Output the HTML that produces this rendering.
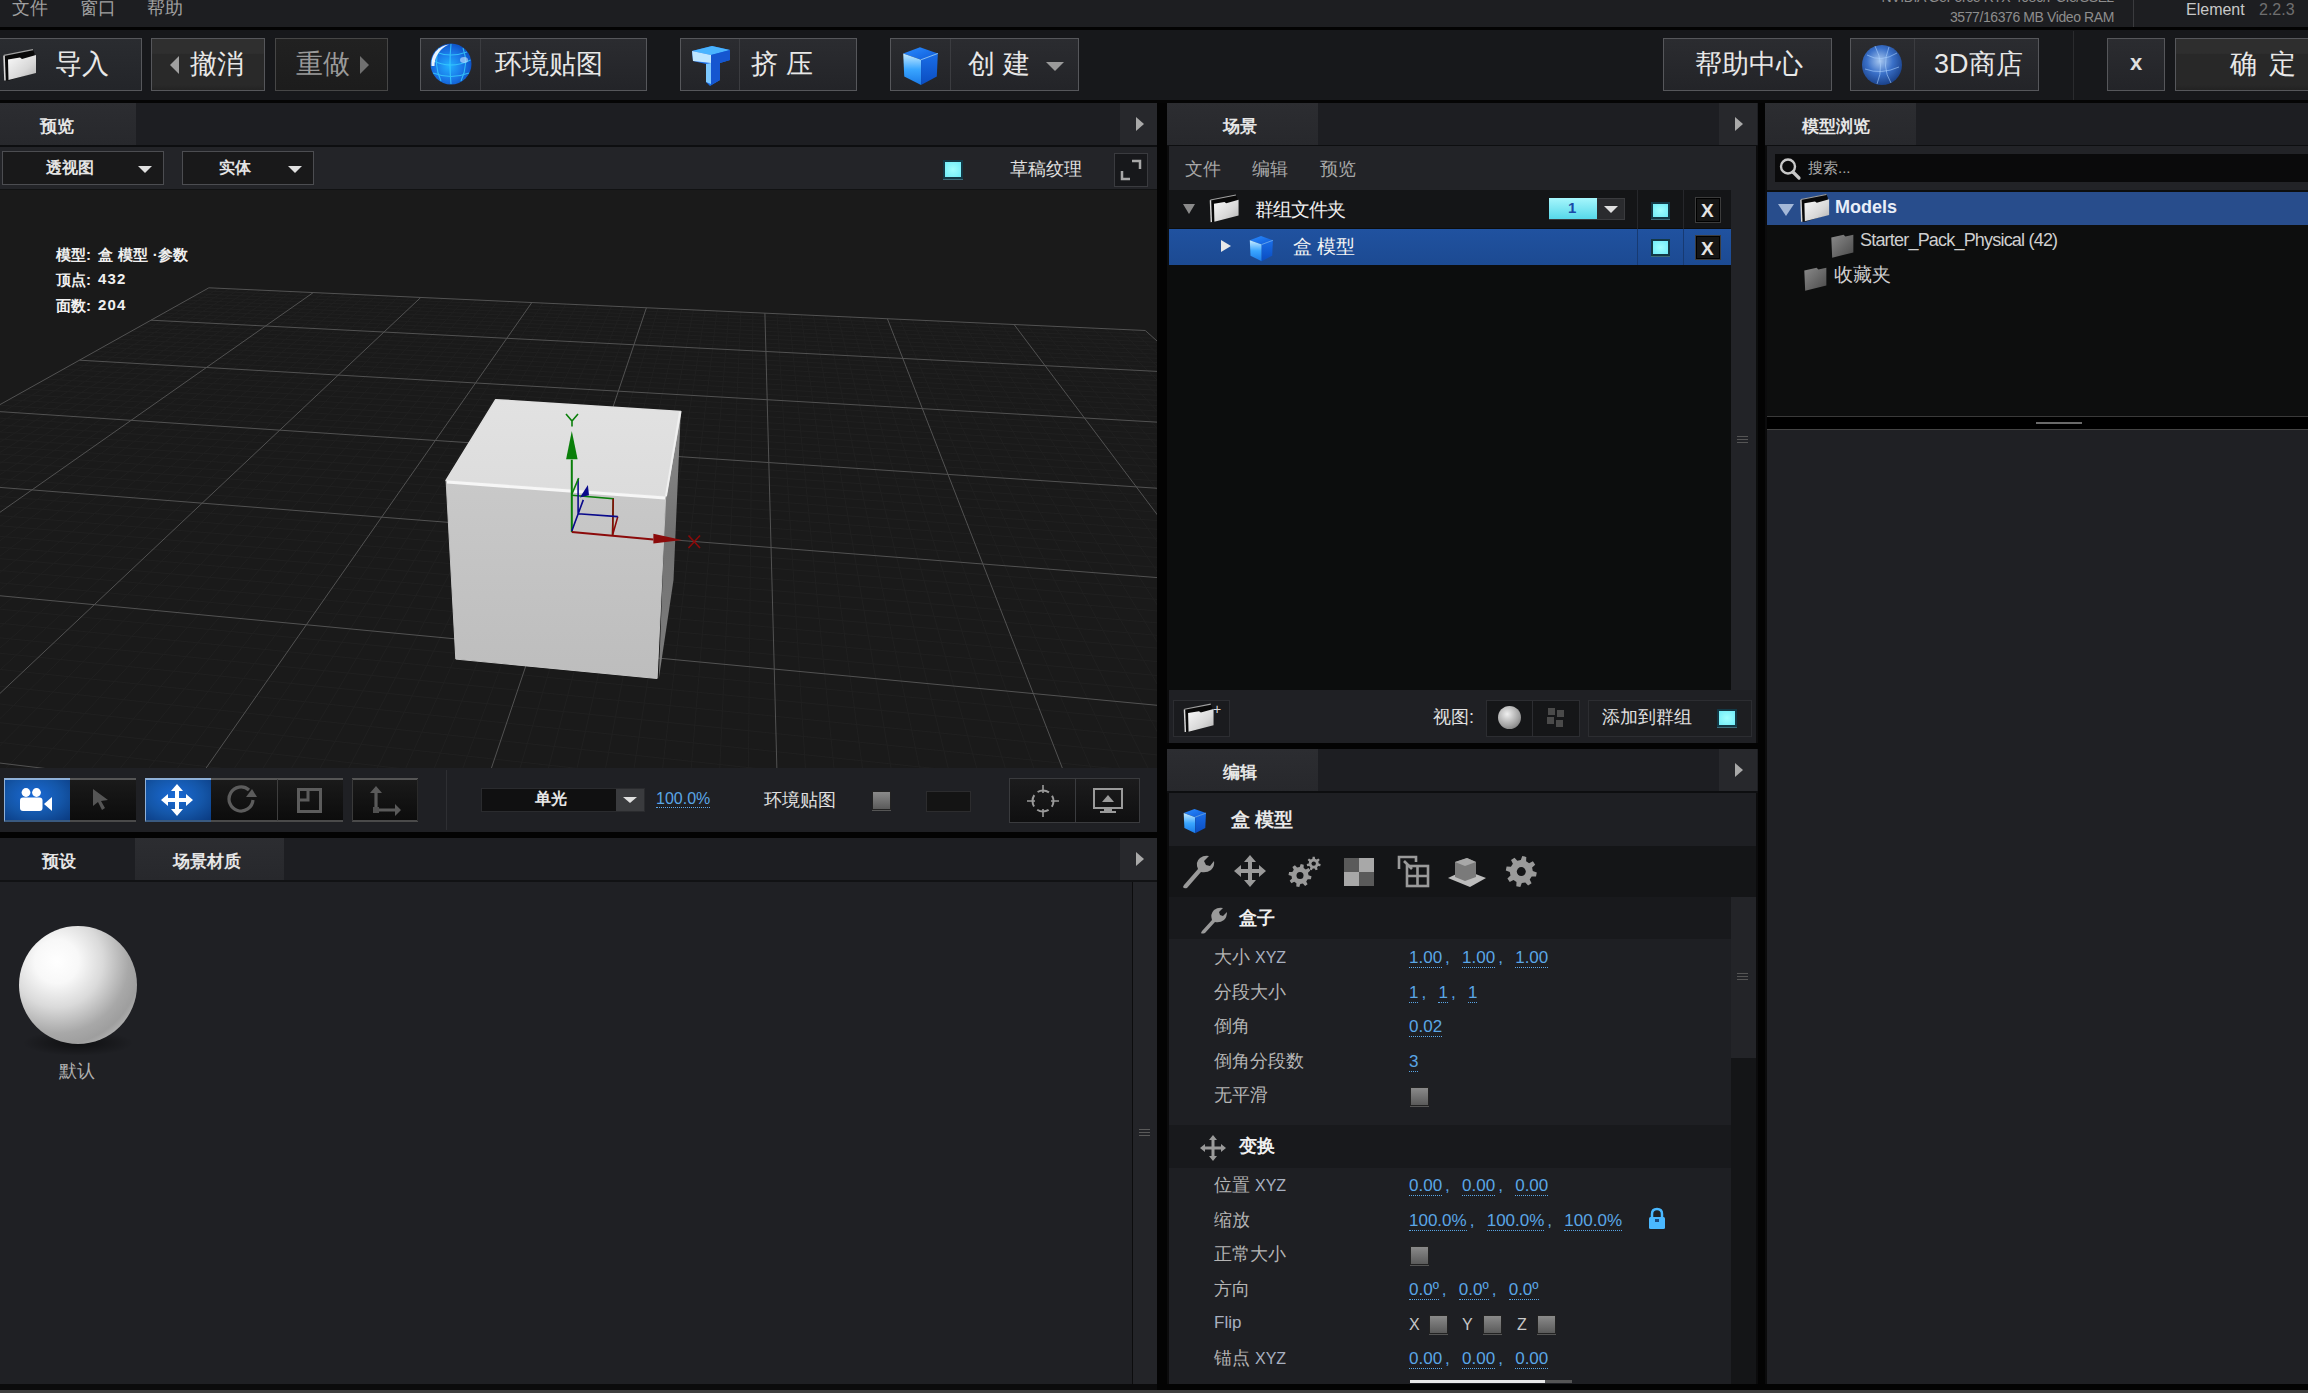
<!DOCTYPE html>
<html><head><meta charset="utf-8">
<style>
*{box-sizing:border-box;margin:0;padding:0}
html,body{width:2308px;height:1393px;overflow:hidden;background:#0b0b0c;font-family:"Liberation Sans",sans-serif;color:#ddd}
.a{position:absolute}
.t{position:absolute;white-space:nowrap;line-height:1}
/* top */
#menubar{left:0;top:0;width:2308px;height:27px;background:#1d1e21}
#toolbar{left:0;top:30px;width:2308px;height:70px;background:#17181b}
.tb{position:absolute;top:38px;height:53px;border:1px solid #56575b;background:linear-gradient(#2b2c30,#232428);}
.tbt{font-size:27px;color:#e8e8e8;top:51px;font-weight:500}
.ptab{position:absolute;height:42px;background:#1d1e22}
.tabon{position:absolute;top:0;height:42px;background:linear-gradient(#2c2d31,#27282c);}
.tabt{font-size:17px;font-weight:bold;color:#e6e6e6}
.arrowbtn{position:absolute;top:0;width:38px;height:42px;background:#27282c}
.arrowbtn:after{content:"";position:absolute;left:16px;top:14px;border-left:8px solid #a9a9a9;border-top:7px solid transparent;border-bottom:7px solid transparent}
.chk{position:absolute;width:19px;height:19px;background:radial-gradient(#a0ffff,#70ecf8);border:2.5px solid #133845;box-shadow:0 1px 0 #3d6a78}
.gchk{position:absolute;width:19px;height:19px;background:linear-gradient(#8a8a8a,#5a5a5a);border:1px solid #222;box-shadow:0 1px 0 #555}
.lbl{position:absolute;font-size:18px;color:#b4b4b4;white-space:nowrap;line-height:1}
.val{position:absolute;font-size:17px;color:#5aa6e6;white-space:nowrap;line-height:1}
.val u{text-decoration:none;border-bottom:1px dotted #5aa6e6}
.val i{display:inline-block;width:20px;font-style:normal;text-indent:3px}
.dd{position:absolute;border:1px solid #4c4d51;background:#19191a}
.ddt{font-size:16px;font-weight:bold;color:#e4e4e4}
.tri{position:absolute;width:0;height:0;border-top:7px solid #e0e0e0;border-left:7px solid transparent;border-right:7px solid transparent}
.vb{position:absolute;top:778px;height:44px;background:linear-gradient(#1a1a1a,#0c0c0c);border-top:2px solid #555;border-bottom:2px solid #4a4a4a}
.bb{background:radial-gradient(ellipse at 45% 40%,#1a6ad6 0%,#1456a8 55%,#0a3a80 100%);border-top:2px solid #8fb0d8;border-left:1px solid #8fb0d8;border-bottom:2px solid #3a5a80}
.xb{position:absolute;width:27px;height:26px;background:#151515;border:1px solid #3c3c3c;box-shadow:inset 0 0 0 1px #000}
.xbt{font-size:19px;font-weight:bold;color:#e4e4e4}
</style></head><body>
<svg width="0" height="0" style="position:absolute">
<defs>
<linearGradient id="gSilver" x1="0" y1="0" x2="1" y2="1"><stop offset="0" stop-color="#fafafa"/><stop offset="0.6" stop-color="#d8d8d8"/><stop offset="1" stop-color="#b0b0b0"/></linearGradient>
<linearGradient id="gGrayF" x1="0" y1="0" x2="1" y2="1"><stop offset="0" stop-color="#8a8a8a"/><stop offset="1" stop-color="#4a4a4a"/></linearGradient>
<radialGradient id="gGlobe" cx="0.45" cy="0.55" r="0.6"><stop offset="0" stop-color="#22b0ff"/><stop offset="0.55" stop-color="#1a78e8"/><stop offset="1" stop-color="#0c4cc0"/></radialGradient>
<radialGradient id="gGlobe2" cx="0.45" cy="0.4" r="0.65"><stop offset="0" stop-color="#a8c8f0"/><stop offset="0.5" stop-color="#3a70c8"/><stop offset="1" stop-color="#153a80"/></radialGradient>
<linearGradient id="gCubeL" x1="0" y1="0" x2="0" y2="1"><stop offset="0" stop-color="#c8ecff"/><stop offset="0.5" stop-color="#3aa6ff"/><stop offset="1" stop-color="#1a7ae8"/></linearGradient>
<linearGradient id="gCubeR" x1="0" y1="0" x2="0" y2="1"><stop offset="0" stop-color="#1a6ee8"/><stop offset="1" stop-color="#0a4cc0"/></linearGradient>
<linearGradient id="gCubeT" x1="0" y1="0" x2="1" y2="1"><stop offset="0" stop-color="#2a8cff"/><stop offset="1" stop-color="#0e5ad8"/></linearGradient>
<linearGradient id="gBlueBtn" x1="0" y1="0" x2="0" y2="1"><stop offset="0" stop-color="#3a7ac8"/><stop offset="1" stop-color="#1552a8"/></linearGradient>
</defs>
<symbol id="folder" viewBox="0 0 34 33">
<path d="M0.5 7 L30 1 L31.5 5 L31.5 24 L6 32 L2 32 Z" fill="#080808"/>
<path d="M1 7 L2 32" stroke="#d8d8d8" stroke-width="1.6"/>
<path d="M1 6.8 L30 1.2" stroke="#a0a0a0" stroke-width="1.2"/>
<path d="M5 11 L17 9 L19 10.5 L33 6.5 L33 24.5 L5.5 31.5 Z" fill="url(#gSilver)"/>
</symbol>
<symbol id="folderG" viewBox="0 0 34 33">
<path d="M6 9 L20 6 L22 8 L31 6 L31 26 L7 32 Z" fill="url(#gGrayF)"/>
</symbol>
<symbol id="cube" viewBox="0 0 40 40">
<path d="M4 9 L20 3 L37 9 L21 15 Z" fill="url(#gCubeT)"/>
<path d="M4 9 L21 15 L21 39 L5 31 Z" fill="url(#gCubeL)"/>
<path d="M21 15 L37 9 L36 31 L21 39 Z" fill="url(#gCubeR)"/>
<path d="M21 15 L37 9" stroke="#9fd4ff" stroke-width="0.8"/>
</symbol>
</svg>
<!-- MENU BAR -->
<div id="menubar" class="a"></div>
<div class="a" style="left:0;top:27px;width:2308px;height:4px;background:#030303"></div>
<div class="t" style="left:12px;top:-1px;font-size:18px;color:#a0a0a0">文件</div>
<div class="t" style="left:80px;top:-1px;font-size:18px;color:#a0a0a0">窗口</div>
<div class="t" style="left:147px;top:-1px;font-size:18px;color:#a0a0a0">帮助</div>
<div class="t" style="right:194px;top:-10px;font-size:14px;color:#8d8d8d;letter-spacing:-0.4px">NVIDIA GeForce RTX 4080/PCIe/SSE2</div>
<div class="t" style="right:194px;top:10px;font-size:14px;color:#8d8d8d;letter-spacing:-0.4px">3577/16376 MB Video RAM</div>
<div class="a" style="left:2133px;top:0;width:1px;height:27px;background:#3a3b3e"></div>
<div class="t" style="left:2186px;top:2px;font-size:16px;color:#c8c8c8">Element</div>
<div class="t" style="left:2259px;top:2px;font-size:16px;color:#6f6f6f">2.2.3</div>

<!-- TOOLBAR -->
<div id="toolbar" class="a"></div>
<div class="tb" style="left:-1px;width:143px;background:linear-gradient(#2a2c30,#232529)"></div>
<svg class="a" style="left:3px;top:48px" width="34" height="34"><use href="#folder"/></svg>
<div class="t tbt" style="left:55px">导入</div>

<div class="tb" style="left:151px;width:114px;background:linear-gradient(#2f2f2f 0%,#2f2f2f 28%,#292929 30%,#292929 90%,#232323 100%)"></div>
<div class="a" style="left:170px;top:56px;width:0;height:0;border-right:9px solid #a0a0a0;border-top:9px solid transparent;border-bottom:9px solid transparent"></div>
<div class="t tbt" style="left:190px">撤消</div>

<div class="tb" style="left:275px;width:113px;background:linear-gradient(#212121,#1c1c1c);border-color:#464646"></div>
<div class="t tbt" style="left:296px;color:#9a9a9a">重做</div>
<div class="a" style="left:360px;top:56px;width:0;height:0;border-left:9px solid #707070;border-top:9px solid transparent;border-bottom:9px solid transparent"></div>

<div class="tb" style="left:420px;width:227px"></div>
<div class="a" style="left:480px;top:39px;width:1px;height:51px;background:#3b3c40"></div>
<svg class="a" style="left:429px;top:43px" width="44" height="44"><circle cx="22" cy="21" r="20.5" fill="url(#gGlobe)"/><g stroke="#3cd4ff" stroke-width="1.1" fill="none" opacity="0.75"><path d="M22 1 Q20 21 22 41"/><path d="M10 5 Q4 21 12 38 M34 5 Q40 21 32 38"/><path d="M2.5 17 Q22 27 41.5 17 M4 30 Q22 37 40 30 M6 9 Q22 15 38 9"/></g><path d="M2.5 23 A19.5 19.5 0 0 1 20 1.5 A23 23 0 0 0 5.5 23 Z" fill="#ffffff" opacity="0.9"/><ellipse cx="35" cy="17" rx="4" ry="3" fill="#cfe6ff" opacity="0.6"/></svg>
<div class="t tbt" style="left:495px">环境贴图</div>

<div class="tb" style="left:680px;width:177px"></div>
<div class="a" style="left:739px;top:39px;width:1px;height:51px;background:#3b3c40"></div>
<svg class="a" style="left:690px;top:44px" width="42" height="44"><path d="M2 7 L22 2 L40 6 L40 16 L30 19 L30 36 L20 42 L16 38 L16 20 L3 17 Z" fill="#1a6ee8"/><path d="M2 7 L22 2 L40 6 L21 11 Z" fill="#4ab4ff"/><path d="M2 7 L21 11 L21 19 L3 17 Z" fill="#bfe6ff"/><path d="M16 20 L21 19 L21 40 L16 38 Z" fill="#7cc8ff"/><path d="M21 11 L40 6 L40 16 L30 19 L30 36 L21 41 Z" fill="#1556d0"/></svg>
<div class="t tbt" style="left:751px">挤&nbsp;压</div>

<div class="tb" style="left:890px;width:189px"></div>
<div class="a" style="left:950px;top:39px;width:1px;height:51px;background:#3b3c40"></div>
<svg class="a" style="left:899px;top:44px" width="42" height="42"><use href="#cube"/></svg>
<div class="t tbt" style="left:968px">创&nbsp;建</div>
<div class="a" style="left:1046px;top:62px;width:0;height:0;border-top:9px solid #9a9a9a;border-left:9px solid transparent;border-right:9px solid transparent"></div>

<div class="tb" style="left:1663px;width:169px"></div>
<div class="t tbt" style="left:1695px">帮助中心</div>
<div class="tb" style="left:1850px;width:189px"></div>
<div class="a" style="left:1914px;top:39px;width:1px;height:51px;background:#3b3c40"></div>
<svg class="a" style="left:1861px;top:43px" width="42" height="44"><circle cx="21" cy="22" r="20" fill="url(#gGlobe2)"/><g stroke="#a8d0ff" stroke-width="1" fill="none" opacity="0.6"><path d="M6 12 Q20 20 36 10 M4 26 Q20 32 38 24 M14 3 Q24 22 16 41 M28 4 Q20 24 30 40"/></g></svg>
<div class="t tbt" style="left:1934px">3D商店</div>
<div class="a" style="left:2073px;top:31px;width:1px;height:69px;background:#2a2b2e"></div>
<div class="tb" style="left:2107px;width:58px"></div>
<div class="t tbt" style="left:2130px;top:52px;font-weight:bold;font-size:22px;color:#e0e0e0">x</div>
<div class="tb" style="left:2175px;width:140px;background:linear-gradient(#2e2e2e 0%,#2e2e2e 28%,#282828 30%,#282828 90%,#222 100%)"></div>
<div class="t tbt" style="left:2230px">确</div><div class="t tbt" style="left:2269px">定</div>
<div class="a" style="left:0;top:100px;width:2308px;height:3px;background:#050505"></div>

<!-- LEFT PANEL -->
<div class="ptab" style="left:0;top:103px;width:1157px">
  <div class="tabon" style="left:0;width:136px"></div>
  <div class="t tabt" style="left:40px;top:15px">预览</div>
  <div class="arrowbtn" style="left:1120px"></div>
</div>
<div class="a" style="left:0;top:145px;width:1157px;height:2px;background:#0d0e10"></div>
<div class="a" style="left:0;top:147px;width:1157px;height:43px;background:#232428"></div>
<div class="dd" style="left:2px;top:151px;width:162px;height:34px"></div>
<div class="t ddt" style="left:46px;top:160px">透视图</div>
<div class="tri" style="left:138px;top:166px"></div>
<div class="dd" style="left:182px;top:151px;width:132px;height:34px"></div>
<div class="t ddt" style="left:219px;top:160px">实体</div>
<div class="tri" style="left:288px;top:166px"></div>
<div class="chk" style="left:943px;top:160px;width:20px;height:19px"></div>
<div class="t" style="left:1010px;top:160px;font-size:18px;color:#e0e0e0">草稿纹理</div>
<div class="a" style="left:1114px;top:153px;width:34px;height:34px;border:1px solid #3a3b3f;background:#17181b"></div>
<svg class="a" style="left:1114px;top:153px" width="34" height="34"><path d="M8 18 L8 26 L16 26 M18 8 L26 8 L26 16" stroke="#a8a8a8" stroke-width="2.5" fill="none"/></svg>

<div class="a" style="left:0;top:189px;width:1157px;height:1px;background:#111213"></div>
<!-- viewport -->
<div class="a" style="left:0;top:190px;width:1157px;height:578px;background:#1a1a1a;overflow:hidden">
<svg width="1157" height="578" style="position:absolute;left:0;top:0">
<path d="M219.2 98.3L-1538.7 1101.6M203.7 100.8L1149.6 144.4M229.5 98.8L-1506.0 1110.3M198.3 103.8L1153.9 148.3M239.9 99.2L-1472.9 1119.0M192.8 106.9L1158.4 152.3M250.3 99.7L-1439.4 1127.9M187.2 110.0L1163.0 156.4M260.7 100.2L-1405.4 1137.0M181.5 113.2L1167.7 160.6M271.1 100.7L-1371.0 1146.1M175.6 116.5L1172.5 164.9M281.6 101.1L-1336.0 1155.4M169.7 119.8L1177.4 169.3M292.1 101.6L-1300.6 1164.8M163.6 123.2L1182.4 173.8M302.6 102.1L-1264.7 1174.3M157.4 126.6L1187.6 178.5M323.8 103.1L-1191.4 1193.7M144.6 133.8L1198.3 188.0M334.4 103.6L-1154.0 1203.7M138.0 137.5L1203.8 193.0M345.1 104.0L-1116.1 1213.8M131.3 141.3L1209.5 198.1M355.8 104.5L-1077.5 1224.0M124.4 145.1L1215.3 203.3M366.5 105.0L-1038.5 1234.3M117.3 149.1L1221.3 208.7M377.3 105.5L-998.8 1244.9M110.1 153.1L1227.5 214.2M388.1 106.0L-958.6 1255.5M102.7 157.2L1233.8 219.8M399.0 106.5L-917.8 1266.4M95.2 161.4L1240.2 225.6M409.8 107.0L-876.4 1277.4M87.5 165.8L1246.9 231.6M431.7 108.0L-791.6 1299.9M71.5 174.7L1260.8 244.0M442.7 108.5L-748.3 1311.4M63.2 179.3L1268.0 250.5M453.7 109.0L-704.3 1323.0M54.7 184.1L1275.5 257.2M464.7 109.5L-659.6 1334.9M46.0 189.0L1283.1 264.1M475.8 110.0L-614.2 1346.9M37.1 193.9L1291.0 271.2M486.9 110.5L-568.1 1359.2M27.9 199.1L1299.2 278.4M498.1 111.0L-521.3 1371.6M18.5 204.3L1307.5 286.0M509.3 111.5L-473.7 1384.2M8.9 209.7L1316.2 293.7M520.5 112.0L-425.3 1397.1M-1.0 215.2L1325.1 301.7M543.1 113.1L-326.2 1423.4M-21.6 226.7L1343.9 318.5M554.4 113.6L-275.5 1436.8M-32.3 232.7L1353.7 327.3M565.8 114.1L-223.9 1450.5M-43.3 238.9L1363.9 336.4M577.2 114.6L-171.4 1464.5M-54.6 245.2L1374.4 345.9M588.6 115.1L-118.0 1478.6M-66.3 251.7L1385.3 355.6M600.1 115.7L-63.7 1493.0M-78.3 258.4L1396.6 365.8M611.6 116.2L-8.5 1507.7M-90.6 265.3L1408.3 376.2M623.2 116.7L47.7 1522.6M-103.3 272.4L1420.4 387.1M634.8 117.2L104.9 1537.8M-116.4 279.8L1433.0 398.4M658.1 118.3L222.3 1568.9M-143.9 295.1L1459.7 422.3M669.8 118.8L282.6 1584.9M-158.2 303.1L1473.8 435.0M681.6 119.4L343.9 1601.2M-173.1 311.4L1488.6 448.2M693.4 119.9L406.5 1617.8M-188.4 320.0L1503.9 461.9M705.2 120.5L470.1 1634.7M-204.3 328.9L1519.9 476.3M717.0 121.0L535.0 1651.9M-220.7 338.0L1536.6 491.2M729.0 121.5L601.1 1669.5M-237.6 347.5L1554.1 506.9M740.9 122.1L668.4 1687.3M-255.2 357.3L1572.3 523.2M752.9 122.6L737.1 1705.6M-273.4 367.5L1591.4 540.4M777.0 123.7L878.4 1743.1M-311.8 389.0L1632.4 577.1M789.1 124.3L951.1 1762.4M-332.1 400.4L1654.5 596.9M801.2 124.8L1025.3 1782.1M-353.2 412.1L1677.6 617.6M813.4 125.4L1101.1 1802.2M-375.1 424.4L1702.1 639.5M825.6 126.0L1178.3 1822.7M-397.9 437.2L1727.8 662.6M837.9 126.5L1257.2 1843.6M-421.7 450.4L1755.0 687.0M850.2 127.1L1337.7 1865.0M-446.4 464.3L1783.8 712.8M862.6 127.6L1419.9 1886.8M-472.2 478.7L1814.2 740.1M875.0 128.2L1503.8 1909.0M-499.2 493.8L1846.5 769.0M899.9 129.3L1677.1 1955.1M-556.7 526.0L1917.5 832.6M912.4 129.9L1766.7 1978.8M-587.6 543.2L1956.6 867.6M925.0 130.5L1858.2 2003.1M-619.9 561.3L1998.3 905.1M937.6 131.1L1951.8 2027.9M-653.8 580.2L2043.1 945.2M950.2 131.6L2047.5 2053.3M-689.4 600.1L2091.3 988.3M962.9 132.2L2145.4 2079.3M-726.8 621.1L2143.1 1034.8M975.6 132.8L2245.6 2105.9M-766.3 643.1L2199.2 1085.1M988.4 133.4L2348.2 2133.1M-807.9 666.4L2260.0 1139.6M1001.2 134.0L2453.2 2161.0M-851.8 691.0L2326.2 1198.9M1027.0 135.1L2670.8 2218.8M-947.5 744.5L2477.6 1334.6M1040.0 135.7L2783.7 2248.7M-999.8 773.7L2564.8 1412.8M1053.0 136.3L2899.4 2279.4M-1055.4 804.8L2661.4 1499.3M1066.0 136.9L3018.0 2310.9M-1114.6 837.9L2768.8 1595.6M1079.1 137.5L3139.7 2343.2M-1177.8 873.2L2889.1 1703.4M1092.3 138.1L3264.5 2376.3M-1245.4 911.0L3024.7 1824.9M1105.4 138.7L3392.6 2410.3M-1317.9 951.6L3178.6 1962.8M1118.7 139.3L3524.1 2445.2M-1395.9 995.2L3355.0 2120.9M1131.9 139.9L3659.2 2481.1M-1480.0 1042.2L3559.1 2303.8" stroke="#202020" stroke-width="1" fill="none"/>
<path d="M208.9 97.8L-1570.9 1093.0M208.9 97.8L1145.3 140.5M313.2 102.6L-1228.4 1183.9M151.1 130.2L1192.9 183.2M420.7 107.5L-834.3 1288.5M79.6 170.2L1253.7 237.7M531.8 112.6L-376.2 1410.1M-11.1 220.9L1334.3 310.0M646.4 117.8L163.1 1553.2M-129.9 287.3L1446.1 410.1M764.9 123.2L807.0 1724.1M-292.2 378.1L1611.4 558.3M887.4 128.8L1589.5 1931.8M-527.3 509.5L1880.9 799.8M1014.1 134.5L2560.7 2189.5M-898.3 716.9L2398.4 1263.6M1145.3 140.5L3798.0 2517.9M-1570.9 1093.0L3798.0 2517.9" stroke="#525252" stroke-width="1" fill="none"/>
<defs>
<linearGradient id="gFront" x1="0" y1="0" x2="0" y2="1"><stop offset="0" stop-color="#c9c9c9"/><stop offset="1" stop-color="#bdbdbd"/></linearGradient>
<linearGradient id="gTop" x1="0" y1="0" x2="0" y2="1"><stop offset="0" stop-color="#e2e2e2"/><stop offset="1" stop-color="#dcdcdc"/></linearGradient>
<linearGradient id="gRight" x1="0" y1="0" x2="0" y2="1"><stop offset="0" stop-color="#8e8e8e"/><stop offset="0.45" stop-color="#737373"/><stop offset="1" stop-color="#7c7c7c"/></linearGradient>
</defs>
<path d="M680.8 221.5 L673.5 390 L658.8 488.8 L665.7 305.6 Z" fill="url(#gRight)"/>
<path d="M446.1 290.4 L665.7 306.6 L657.1 488.5 L455.8 469.1 Z" fill="url(#gFront)" stroke="#c4c4c4" stroke-width="1" stroke-linejoin="round"/>
<path d="M495.7 209.7 L680.8 221.5 L665.7 306.6 L446.1 290.4 Z" fill="url(#gTop)" stroke="#e0e0e0" stroke-width="1.5" stroke-linejoin="round"/>
<path d="M447 292 L665 308" stroke="#f6f6f6" stroke-width="3"/>
<path d="M666 306 L680 222" stroke="#f0f0f0" stroke-width="2"/>
<g fill="none" stroke-width="2">
<path d="M571.8 342.1 L571.8 269.7" stroke="#0a7f0a"/>
<path d="M571.8 342.1 L653.4 349.6" stroke="#8b0a0a"/>
<path d="M571.8 305.3 L613.2 308.8 L612.6 345" stroke-width="1.6" stroke="#0a7f0a"/>
<path d="M613.2 308.8 L612.6 345 M617.8 326.6 L612.6 345" stroke-width="1.6" stroke="#8b0a0a"/>
<path d="M578.1 323.7 L617.8 326.6 M571.8 341 L583.3 309.9 M578.1 289.3 L578.1 323.7" stroke-width="1.6" stroke="#0a0a8b"/>
<path d="M571.8 304.2 L578.7 288.1" stroke-width="1.6" stroke="#0a7f0a"/>
</g>
<path d="M566.1 269.2 L577.6 269.2 L571.8 241 Z" fill="#0a7f0a"/>
<path d="M653.4 343.8 L653.4 353.6 L682.1 350.1 Z" fill="#8b0a0a"/>
<path d="M579.9 307.6 L587.9 295 L589 305.3 Z" fill="#0a0a8b"/>
<path d="M566 224 L572 231 L578 224 M572 231 L572 236.5" stroke="#0a7f0a" stroke-width="1.6" fill="none"/>
<path d="M688.5 345.5 L700 358 M700 345.5 L688.5 358" stroke="#8b0a0a" stroke-width="1.6" fill="none"/>
</svg>
<div class="t" style="left:56px;top:57px;font-size:15px;color:#f0f0f0;font-weight:bold">模型:</div>
<div class="t" style="left:98px;top:57px;font-size:15px;color:#f0f0f0;font-weight:bold;letter-spacing:0.3px">盒 模型 ·参数</div>
<div class="t" style="left:56px;top:82px;font-size:15px;color:#f0f0f0;font-weight:bold">顶点:</div>
<div class="t" style="left:98px;top:81px;font-size:15px;color:#f0f0f0;font-weight:bold;letter-spacing:1.2px">432</div>
<div class="t" style="left:56px;top:108px;font-size:15px;color:#f0f0f0;font-weight:bold">面数:</div>
<div class="t" style="left:98px;top:107px;font-size:15px;color:#f0f0f0;font-weight:bold;letter-spacing:1.2px">204</div>
</div>

<div class="a" style="left:0;top:768px;width:1157px;height:64px;background:#1f2024"></div>
<div class="a" style="left:0;top:832px;width:1157px;height:6px;background:#030303"></div>
<div class="vb bb" style="left:4px;width:66px"></div>
<svg class="a" style="left:18px;top:786px" width="38" height="28"><circle cx="8" cy="6.5" r="4.4" fill="#fff"/><circle cx="18.5" cy="6.5" r="4.4" fill="#fff"/><rect x="2" y="11.5" width="22.5" height="13.5" rx="3" fill="#fff"/><path d="M26 18 L34 11 L34 25 Z" fill="#fff"/></svg>
<div class="vb" style="left:70px;width:66px"></div>
<svg class="a" style="left:88px;top:785px" width="26" height="30"><path d="M5 4 L5 21 L10 17 L14 25 L17 23 L13 16 L20 15 Z" fill="#555"/></svg>
<div class="vb bb" style="left:145px;width:66px"></div>
<svg class="a" style="left:160px;top:783px" width="34" height="34"><path d="M17 1 L23 8 L19 8 L19 15 L26 15 L26 11 L33 17 L26 23 L26 19 L19 19 L19 26 L23 26 L17 33 L11 26 L15 26 L15 19 L8 19 L8 23 L1 17 L8 11 L8 15 L15 15 L15 8 L11 8 Z" fill="#fff"/></svg>
<div class="vb" style="left:211px;width:66px"></div>
<svg class="a" style="left:226px;top:785px" width="32" height="30"><path d="M23 5 A12 12 0 1 0 27 15" stroke="#5c5c5c" stroke-width="3.2" fill="none"/><path d="M20 12 L26 4 L31 12 Z" fill="#5c5c5c"/></svg>
<div class="vb" style="left:277px;width:66px"></div>
<svg class="a" style="left:296px;top:787px" width="28" height="28"><rect x="2.5" y="2.5" width="22" height="22" stroke="#5c5c5c" stroke-width="3" fill="none"/><path d="M2.5 13 L12 13 L12 2.5" stroke="#5c5c5c" stroke-width="3" fill="none"/></svg>
<div class="vb" style="left:352px;width:66px"></div>
<svg class="a" style="left:365px;top:785px" width="36" height="32"><path d="M11 6 L11 25 L31 25" stroke="#5a5a5a" stroke-width="3.2" fill="none"/><path d="M5 8 L11 1 L17 8 Z M30 19 L36 25 L30 31 Z" fill="#5a5a5a"/><rect x="8" y="22" width="6" height="6" fill="#505050"/></svg>
<div class="a" style="left:277px;top:779px;width:1px;height:42px;background:#3e3e3e"></div>
<div class="a" style="left:352px;top:779px;width:1px;height:42px;background:#3a3a3a"></div>
<div class="a" style="left:417px;top:779px;width:1px;height:42px;background:#2a2a2a"></div>
<div class="a" style="left:446px;top:770px;width:1px;height:60px;background:#2e2f33"></div>
<div class="a" style="left:481px;top:788px;width:164px;height:24px;background:#101011;border:1px solid #2a2b2e"></div>
<div class="a" style="left:616px;top:789px;width:28px;height:22px;background:#3a3b3e"></div>
<div class="tri" style="left:623px;top:797px;border-top-width:6px;border-left-width:7px;border-right-width:7px"></div>
<div class="t" style="left:535px;top:791px;font-size:16px;font-weight:bold;color:#e8e8e8">单光</div>
<div class="t val" style="left:656px;top:791px;font-size:16px"><u>100.0%</u></div>
<div class="t" style="left:764px;top:791px;font-size:18px;color:#e0e0e0">环境贴图</div>
<div class="gchk" style="left:872px;top:791px;width:19px;height:19px"></div>
<div class="a" style="left:926px;top:791px;width:45px;height:21px;background:#141414;border:1px solid #2c2c2e"></div>
<div class="a" style="left:1009px;top:778px;width:131px;height:45px;border:1px solid #3a3b3e;background:linear-gradient(#1c1c1d,#0f0f10)"></div>
<div class="a" style="left:1075px;top:779px;width:1px;height:43px;background:#3a3b3e"></div>
<svg class="a" style="left:1026px;top:784px" width="34" height="34"><circle cx="17" cy="17" r="10.5" stroke="#9a9a9a" stroke-width="2" fill="none" stroke-dasharray="12 4.5" stroke-dashoffset="6"/><path d="M17 1 L17 9 M17 25 L17 33 M1 17 L9 17 M25 17 L33 17" stroke="#9a9a9a" stroke-width="1.6"/></svg>
<svg class="a" style="left:1092px;top:787px" width="32" height="28"><rect x="2" y="2" width="28" height="19" stroke="#9a9a9a" stroke-width="2" fill="none"/><path d="M10 15 L16 8 L22 15 Z" fill="#9a9a9a"/><rect x="12" y="22" width="8" height="2" fill="#9a9a9a"/><rect x="8" y="24" width="16" height="2" fill="#9a9a9a"/></svg>
<div class="ptab" style="left:0;top:838px;width:1157px">
  <div class="tabon" style="left:135px;width:149px"></div>
  <div class="t tabt" style="left:42px;top:15px">预设</div>
  <div class="t tabt" style="left:173px;top:15px">场景材质</div>
  <div class="arrowbtn" style="left:1120px"></div>
</div>
<div class="a" style="left:0;top:880px;width:1157px;height:2px;background:#111214"></div>
<div class="a" style="left:0;top:882px;width:1157px;height:502px;background:#1f2024"></div>
<div class="a" style="left:1132px;top:882px;width:1px;height:502px;background:#0c0c0d"></div>
<div class="a" style="left:1133px;top:882px;width:24px;height:502px;background:#232428"></div>
<div class="a" style="left:1139px;top:1129px;width:11px;height:9px;background:repeating-linear-gradient(#5a5a5a 0 1px,transparent 1px 3px)"></div>
<div class="a" style="left:22px;top:1030px;width:112px;height:26px;border-radius:50%;background:radial-gradient(ellipse,rgba(0,0,0,0.55),rgba(0,0,0,0) 70%)"></div>
<div class="a" style="left:19px;top:926px;width:118px;height:118px;border-radius:50%;background:radial-gradient(circle 92px at 32% 30%,#ffffff 0px,#f8f8f8 22px,#dadada 46px,#a8a8a8 72px,#9e9e9e 84px,#b0b0b0 92px)"></div>
<div class="t" style="left:59px;top:1062px;font-size:18px;color:#b0b0b0">默认</div>

<!-- SCENE PANEL -->
<div class="ptab" style="left:1167px;top:103px;width:591px">
  <div class="tabon" style="left:0;width:151px"></div>
  <div class="t tabt" style="left:56px;top:15px">场景</div>
  <div class="arrowbtn" style="left:552px"></div>
</div>
<div class="a" style="left:1167px;top:145px;width:591px;height:1px;background:#0d0e10"></div>
<div class="a" style="left:1169px;top:146px;width:587px;height:44px;background:#222327"></div>
<div class="t" style="left:1185px;top:160px;font-size:18px;color:#a8a8a8">文件</div>
<div class="t" style="left:1252px;top:160px;font-size:18px;color:#a8a8a8">编辑</div>
<div class="t" style="left:1320px;top:160px;font-size:18px;color:#a8a8a8">预览</div>
<div class="a" style="left:1167px;top:190px;width:591px;height:500px;background:#0c0d0d"></div>
<div class="a" style="left:1731px;top:190px;width:25px;height:500px;background:#222327"></div>
<div class="a" style="left:1737px;top:436px;width:11px;height:9px;background:repeating-linear-gradient(#555 0 1px,transparent 1px 3px)"></div>
<!-- row 1 -->
<div class="a" style="left:1169px;top:190px;width:562px;height:38px;background:#141517"></div>
<div class="a" style="left:1637px;top:190px;width:1px;height:75px;background:#26272b"></div>
<div class="a" style="left:1683px;top:190px;width:1px;height:75px;background:#26272b"></div>
<div class="tri" style="left:1183px;top:204px;border-top:10px solid #8a8a8a;border-left:6px solid transparent;border-right:6px solid transparent"></div>
<svg class="a" style="left:1209px;top:194px" width="31" height="29"><use href="#folder"/></svg>
<div class="t" style="left:1255px;top:200px;font-size:19px;color:#f0f0f0;letter-spacing:-0.9px">群组文件夹</div>
<div class="a" style="left:1549px;top:198px;width:76px;height:22px;background:#2a2b2e;border:1px solid #3a3b3e"></div>
<div class="a" style="left:1549px;top:198px;width:48px;height:21px;background:linear-gradient(#a6f6fc,#56d8ea)"></div>
<div class="t" style="left:1568px;top:200px;font-size:15px;font-weight:bold;color:#1a4aa8">1</div>
<div class="tri" style="left:1604px;top:206px;border-top-width:7px;border-left-width:7px;border-right-width:7px"></div>
<div class="chk" style="left:1651px;top:202px;width:19px;height:17px"></div>
<div class="xb" style="left:1695px;top:197px;width:26px;height:26px"></div>
<div class="t xbt" style="left:1701px;top:201px">X</div>
<!-- row 2 selected -->
<div class="a" style="left:1169px;top:229px;width:562px;height:36px;background:linear-gradient(#2052a0,#1c4a92)"></div>
<div class="a" style="left:1637px;top:229px;width:1px;height:36px;background:#173a72"></div>
<div class="a" style="left:1683px;top:229px;width:1px;height:36px;background:#173a72"></div>
<div class="a" style="left:1221px;top:240px;width:0;height:0;border-left:10px solid #e8e8e8;border-top:6px solid transparent;border-bottom:6px solid transparent"></div>
<svg class="a" style="left:1247px;top:234px" width="28" height="28"><use href="#cube"/></svg>
<div class="t" style="left:1293px;top:237px;font-size:19px;color:#f4f4f4">盒 模型</div>
<div class="chk" style="left:1651px;top:239px;width:19px;height:17px"></div>
<div class="xb" style="left:1695px;top:235px;width:26px;height:25px"></div>
<div class="t xbt" style="left:1701px;top:239px">X</div>
<!-- bottom bar -->
<div class="a" style="left:1169px;top:690px;width:587px;height:53px;background:#1f2024"></div>
<div class="a" style="left:1173px;top:700px;width:57px;height:37px;border:1px solid #2c2d31;background:#1a1b1e"></div>
<svg class="a" style="left:1182px;top:703px" width="34" height="30"><use href="#folder"/></svg>
<div class="t" style="left:1213px;top:702px;font-size:14px;color:#ddd">+</div>
<div class="t" style="left:1433px;top:708px;font-size:18px;color:#e0e0e0">视图:</div>
<div class="a" style="left:1486px;top:700px;width:94px;height:37px;border:1px solid #2c2d31;background:#151618"></div>
<div class="a" style="left:1532px;top:701px;width:1px;height:35px;background:#2c2d31"></div>
<div class="a" style="left:1498px;top:706px;width:23px;height:23px;border-radius:50%;background:radial-gradient(circle at 40% 35%,#f0f0f0,#a0a0a0 60%,#606060)"></div>
<svg class="a" style="left:1545px;top:706px" width="22" height="24"><g fill="#4a4a4a"><rect x="3" y="2" width="7" height="7"/><rect x="12" y="4" width="7" height="7"/><rect x="2" y="11" width="7" height="7"/><rect x="11" y="14" width="7" height="7"/></g></svg>
<div class="a" style="left:1588px;top:700px;width:164px;height:37px;border:1px solid #2c2d31;background:#1d1e21"></div>
<div class="t" style="left:1602px;top:708px;font-size:18px;color:#e0e0e0">添加到群组</div>
<div class="chk" style="left:1717px;top:709px;width:20px;height:18px"></div>
<div class="a" style="left:1167px;top:743px;width:591px;height:6px;background:#030303"></div>
<!-- EDIT PANEL -->
<div class="ptab" style="left:1167px;top:749px;width:591px">
  <div class="tabon" style="left:0;width:151px"></div>
  <div class="t tabt" style="left:56px;top:15px">编辑</div>
  <div class="arrowbtn" style="left:552px"></div>
</div>
<div class="a" style="left:1167px;top:791px;width:591px;height:2px;background:#0d0e10"></div>
<div class="a" style="left:1169px;top:793px;width:587px;height:53px;background:#1e1f23"></div>
<svg class="a" style="left:1181px;top:807px" width="27" height="27"><use href="#cube"/></svg>
<div class="t" style="left:1231px;top:810px;font-size:19px;font-weight:bold;color:#e8e8e8">盒 模型</div>
<div class="a" style="left:1169px;top:846px;width:587px;height:51px;background:#141517"></div>
<svg class="a" style="left:1180px;top:854px" width="370" height="36">
<g fill="#9a9a9a">
<path d="M4 31 L18 15 Q15 8 20 4 Q24 1 29 2 L24 7 L26 11 L30 12 L34 7 Q35 12 31 16 Q27 19 21 18 L7 34 Q4 35 3 33 Z"/>
<path d="M70 1 L76 8 L72 8 L72 15 L79 15 L79 11 L86 17 L79 23 L79 19 L72 19 L72 26 L76 26 L70 33 L64 26 L68 26 L68 19 L61 19 L61 23 L54 17 L61 11 L61 15 L68 15 L68 8 L64 8 Z"/>
<path d="M128.5 21.3 L131.5 22.3 L130.9 25.3 L127.7 25.2 L126.2 27.4 L127.6 30.2 L125.1 31.9 L122.9 29.6 L120.3 30.1 L119.3 33.1 L116.3 32.5 L116.4 29.3 L114.2 27.8 L111.4 29.2 L109.7 26.7 L112.0 24.5 L111.5 21.9 L108.5 20.9 L109.1 17.9 L112.3 18.0 L113.8 15.8 L112.4 13.0 L114.9 11.3 L117.1 13.6 L119.7 13.1 L120.7 10.1 L123.7 10.7 L123.6 13.9 L125.8 15.4 L128.6 14.0 L130.3 16.5 L128.0 18.7 Z M138.7 9.4 L140.7 10.1 L140.2 12.2 L138.1 12.0 L137.0 13.4 L137.7 15.4 L135.7 16.3 L134.6 14.5 L132.8 14.5 L131.7 16.3 L129.7 15.4 L130.4 13.4 L129.3 12.0 L127.2 12.2 L126.7 10.1 L128.7 9.4 L129.1 7.6 L127.6 6.1 L129.0 4.5 L130.8 5.6 L132.4 4.8 L132.6 2.7 L134.8 2.7 L135.0 4.8 L136.6 5.6 L138.4 4.5 L139.8 6.1 L138.3 7.6 Z"/>
<rect x="164" y="4" width="15" height="14" fill="#5a5a5a"/><rect x="179" y="4" width="15" height="14" fill="#a8a8a8"/><rect x="164" y="18" width="15" height="14" fill="#a8a8a8"/><rect x="179" y="18" width="15" height="14" fill="#5a5a5a"/>
</g>
<g fill="#141517"><circle cx="120" cy="21.6" r="3.5"/><circle cx="133.7" cy="9.6" r="2.2"/></g>
<g stroke="#9a9a9a" stroke-width="2.6" fill="none"><path d="M219 15 L219 3 L236 3 L236 8"/><rect x="227" y="12" width="21" height="20"/><path d="M227 22 L248 22 M237.5 12 L237.5 32"/><path d="M224 7 L232 15"/></g>
<path d="M268 24 L285 16 L306 24 L290 33 Z" fill="#bdbdbd"/><path d="M275 8 L287 4 L296 8 L296 23 L285 27 L275 23 Z" fill="#7a7a7a"/><path d="M275 8 L287 4 L296 8 L285 12 Z" fill="#a8a8a8"/>
<path d="M352.8 17.1 L356.8 18.6 L356.0 22.6 L351.7 22.4 L349.7 25.4 L351.6 29.2 L348.1 31.5 L345.3 28.4 L341.8 29.1 L340.3 33.1 L336.3 32.3 L336.5 28.0 L333.5 26.0 L329.7 27.9 L327.4 24.4 L330.5 21.6 L329.8 18.1 L325.8 16.6 L326.6 12.6 L330.9 12.8 L332.9 9.8 L331.0 6.0 L334.5 3.7 L337.3 6.8 L340.8 6.1 L342.3 2.1 L346.3 2.9 L346.1 7.2 L349.1 9.2 L352.9 7.3 L355.2 10.8 L352.1 13.6 Z" fill="#9a9a9a"/><circle cx="341.3" cy="17.6" r="4.5" fill="#141517"/>
</svg>
<!-- sections -->
<div class="a" style="left:1169px;top:897px;width:562px;height:487px;background:#1e1f23"></div>
<div class="a" style="left:1731px;top:897px;width:25px;height:487px;background:#141517"></div>
<div class="a" style="left:1731px;top:897px;width:25px;height:161px;background:#232428"></div>
<div class="a" style="left:1737px;top:973px;width:11px;height:9px;background:repeating-linear-gradient(#555 0 1px,transparent 1px 3px)"></div>
<div class="a" style="left:1169px;top:897px;width:562px;height:42px;background:#18191c"></div>
<svg class="a" style="left:1199px;top:906px" width="28" height="28"><path d="M3 25 L13 14 Q11 8 15 4 Q19 1 24 2 L20 6 L21 9 L24 10 L28 6 Q28 11 25 14 Q21 17 16 16 L6 27 Q3 28 2 27 Z" fill="#9a9a9a"/></svg>
<div class="t" style="left:1239px;top:909px;font-size:18px;font-weight:bold;color:#f0f0f0">盒子</div>
<div class="lbl" style="left:1214px;top:948px">大小 <span style="color:#a8b0c0;font-size:16px">XYZ</span></div>
<div class="val" style="left:1409px;top:949px"><u>1.00</u><i>,</i><u>1.00</u><i>,</i><u>1.00</u></div>
<div class="lbl" style="left:1214px;top:983px">分段大小</div>
<div class="val" style="left:1409px;top:984px"><u>1</u><i>,</i><u>1</u><i>,</i><u>1</u></div>
<div class="lbl" style="left:1214px;top:1017px">倒角</div>
<div class="val" style="left:1409px;top:1018px"><u>0.02</u></div>
<div class="lbl" style="left:1214px;top:1052px">倒角分段数</div>
<div class="val" style="left:1409px;top:1053px"><u>3</u></div>
<div class="lbl" style="left:1214px;top:1086px">无平滑</div>
<div class="gchk" style="left:1410px;top:1087px"></div>
<div class="a" style="left:1169px;top:1125px;width:562px;height:43px;background:#18191c"></div>
<svg class="a" style="left:1199px;top:1134px" width="28" height="28"><path d="M14 1 L18 6 L15.5 6 L15.5 12.5 L22 12.5 L22 10 L27 14 L22 18 L22 15.5 L15.5 15.5 L15.5 22 L18 22 L14 27 L10 22 L12.5 22 L12.5 15.5 L6 15.5 L6 18 L1 14 L6 10 L6 12.5 L12.5 12.5 L12.5 6 L10 6 Z" fill="#9a9a9a"/></svg>
<div class="t" style="left:1239px;top:1137px;font-size:18px;font-weight:bold;color:#f0f0f0">变换</div>
<div class="lbl" style="left:1214px;top:1176px">位置 <span style="color:#a8b0c0;font-size:16px">XYZ</span></div>
<div class="val" style="left:1409px;top:1177px"><u>0.00</u><i>,</i><u>0.00</u><i>,</i><u>0.00</u></div>
<div class="lbl" style="left:1214px;top:1211px">缩放</div>
<div class="val" style="left:1409px;top:1212px"><u>100.0%</u><i>,</i><u>100.0%</u><i>,</i><u>100.0%</u></div>
<svg class="a" style="left:1647px;top:1207px" width="20" height="24"><path d="M5 11 L5 7 Q5 2 10 2 Q15 2 15 7 L15 11" stroke="#4ab8ff" stroke-width="2.5" fill="none"/><rect x="2" y="10" width="16" height="12" rx="1.5" fill="#4ab8ff"/><rect x="8" y="12" width="4" height="3" fill="#1a4a80"/></svg>
<div class="lbl" style="left:1214px;top:1245px">正常大小</div>
<div class="gchk" style="left:1410px;top:1246px"></div>
<div class="lbl" style="left:1214px;top:1280px">方向</div>
<div class="val" style="left:1409px;top:1281px"><u>0.0º</u><i>,</i><u>0.0º</u><i>,</i><u>0.0º</u></div>
<div class="lbl" style="left:1214px;top:1314px;color:#a8b0c0;font-size:17px">Flip</div>
<div class="t" style="left:1409px;top:1317px;font-size:16px;color:#c8c8c8">X</div>
<div class="gchk" style="left:1429px;top:1315px"></div>
<div class="t" style="left:1462px;top:1317px;font-size:16px;color:#c8c8c8">Y</div>
<div class="gchk" style="left:1483px;top:1315px"></div>
<div class="t" style="left:1517px;top:1317px;font-size:16px;color:#c8c8c8">Z</div>
<div class="gchk" style="left:1537px;top:1315px"></div>
<div class="lbl" style="left:1214px;top:1349px">锚点 <span style="color:#a8b0c0;font-size:16px">XYZ</span></div>
<div class="val" style="left:1409px;top:1350px"><u>0.00</u><i>,</i><u>0.00</u><i>,</i><u>0.00</u></div>
<div class="a" style="left:1410px;top:1380px;width:135px;height:3px;background:#e8e8e8"></div>
<div class="a" style="left:1545px;top:1380px;width:27px;height:3px;background:#555"></div>
<div class="a" style="left:1167px;top:1384px;width:591px;height:6px;background:#030303"></div>
<div class="a" style="left:1758px;top:103px;width:7px;height:1287px;background:#030303"></div>
<div class="a" style="left:1157px;top:103px;width:10px;height:1287px;background:#030303"></div>

<!-- MODEL BROWSER -->
<div class="ptab" style="left:1765px;top:103px;width:543px">
  <div class="tabon" style="left:0;width:151px"></div>
  <div class="t tabt" style="left:37px;top:15px">模型浏览</div>
</div>
<div class="a" style="left:1765px;top:145px;width:543px;height:1px;background:#0d0e10"></div>
<div class="a" style="left:1767px;top:146px;width:541px;height:44px;background:#222327"></div>
<div class="a" style="left:1775px;top:154px;width:533px;height:28px;background:#0a0a0b"></div>
<svg class="a" style="left:1778px;top:157px" width="26" height="24"><circle cx="10" cy="9.5" r="7" stroke="#c8c8c8" stroke-width="2.4" fill="none"/><path d="M15 15 L21 21" stroke="#c8c8c8" stroke-width="3.2" stroke-linecap="round"/></svg>
<div class="t" style="left:1808px;top:160px;font-size:15px;color:#a8a8a8">搜索...</div>
<div class="a" style="left:1767px;top:190px;width:541px;height:226px;background:#0d0e0e"></div>
<div class="a" style="left:1767px;top:192px;width:541px;height:33px;background:#284d8c"></div>
<div class="tri" style="left:1778px;top:204px;border-top:12px solid #a4b8d8;border-left:8px solid transparent;border-right:8px solid transparent"></div>
<svg class="a" style="left:1800px;top:193px" width="30" height="30"><use href="#folder"/></svg>
<div class="t" style="left:1835px;top:198px;font-size:18px;font-weight:bold;color:#e8eef8">Models</div>
<svg class="a" style="left:1826px;top:229px" width="30" height="30"><use href="#folderG"/></svg>
<div class="t" style="left:1860px;top:231px;font-size:18px;color:#cfcfcf;letter-spacing:-0.8px">Starter_Pack_Physical (42)</div>
<svg class="a" style="left:1799px;top:262px" width="30" height="30"><use href="#folderG"/></svg>
<div class="t" style="left:1834px;top:265px;font-size:19px;color:#d0d0d0">收藏夹</div>
<div class="a" style="left:1767px;top:416px;width:541px;height:1px;background:#3a3a3a"></div>
<div class="a" style="left:1767px;top:417px;width:541px;height:12px;background:#000"></div>
<div class="a" style="left:2036px;top:422px;width:46px;height:2px;background:#6a6a6a"></div>
<div class="a" style="left:1767px;top:429px;width:541px;height:1px;background:#444"></div>
<div class="a" style="left:1767px;top:430px;width:541px;height:954px;background:#1f2024"></div>
<div class="a" style="left:1765px;top:1384px;width:543px;height:6px;background:#030303"></div>
<!-- bottom strip -->
<div class="a" style="left:0;top:1390px;width:2308px;height:3px;background:#3d3d3d"></div>
</body></html>
